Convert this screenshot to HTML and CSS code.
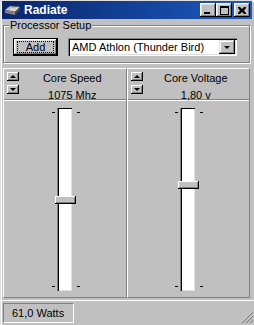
FILE: index.html
```html
<!DOCTYPE html>
<html lang="en">
<head>
    <meta charset="UTF-8">
    <title>Radiate</title>
    <link rel="stylesheet" href="styles.css">
</head>
<body>
    <div class="window">
        <div class="titlebar">
            <svg class="app-icon" width="17" height="16" viewBox="0 0 17 16">
                <path d="M1 8 L6 4 L16 5 L11 10 Z" fill="#d8d8d8" stroke="#606060" stroke-width="0.8"/>
                <path d="M1 8 L11 10 L11 13 L1 11 Z" fill="#808080"/>
                <path d="M11 10 L16 5 L16 8 L11 13 Z" fill="#4a4a4a"/>
                <path d="M4 7 L8 5 L12 6" stroke="#a0a0a0" stroke-width="0.8" fill="none"/>
            </svg>
            <span class="title">Radiate</span>
            <div class="caption-buttons">
                <span class="cap-btn"><span class="glyph-min"></span></span>
                <span class="cap-btn"><span class="glyph-max"></span></span>
                <span class="cap-btn close">
                    <svg width="8" height="7" viewBox="0 0 8 7">
                        <path d="M0 0h2l2 2 2-2h2v1L6 3.5 8 6v1H6L4 5 2 7H0V6l2-2.5L0 1z" fill="#000"/>
                    </svg>
                </span>
            </div>
        </div>

        <fieldset class="group">
            <legend>Processor Setup</legend>
            <div class="group-row">
                <span class="btn default"><span class="focus">Add</span></span>
                <div class="combo">
                    <span class="combo-text">AMD Athlon (Thunder Bird)</span>
                    <span class="combo-arrow"><span class="arrow-down"></span></span>
                </div>
            </div>
        </fieldset>

        <div class="panels">
            <div class="panel">
                <div class="panel-head">
                    <div class="spin">
                        <span class="spin-btn"><span class="arrow-up"></span></span>
                        <span class="spin-btn"><span class="arrow-down"></span></span>
                    </div>
                    <div class="head-text">
                        <div>Core Speed</div>
                        <div>1075 Mhz</div>
                    </div>
                </div>
                <div class="slider-area">
                    <div class="slider">
                        <span class="tick tl"></span><span class="tick tr"></span>
                        <span class="tick bl"></span><span class="tick br"></span>
                        <div class="track"></div>
                        <span class="thumb" style="top: 88px"></span>
                    </div>
                </div>
            </div>
            <div class="panel">
                <div class="panel-head">
                    <div class="spin">
                        <span class="spin-btn"><span class="arrow-up"></span></span>
                        <span class="spin-btn"><span class="arrow-down"></span></span>
                    </div>
                    <div class="head-text">
                        <div>Core Voltage</div>
                        <div>1,80 v</div>
                    </div>
                </div>
                <div class="slider-area">
                    <div class="slider">
                        <span class="tick tl"></span><span class="tick tr"></span>
                        <span class="tick bl"></span><span class="tick br"></span>
                        <div class="track"></div>
                        <span class="thumb" style="top: 73px"></span>
                    </div>
                </div>
            </div>
        </div>

        <div class="statusbar">
            <div class="status-panel">61,0 Watts</div>
            <svg class="grip" width="12" height="12" viewBox="0 0 12 12">
                <path d="M11 1 L1 11 M11 5 L5 11 M11 9 L9 11" stroke="#fff" stroke-width="1"/>
                <path d="M12 1 L1 12 M12 5 L5 12 M12 9 L9 12" stroke="#808080" stroke-width="1.2"/>
            </svg>
        </div>
    </div>
</body>
</html>
```

FILE: styles.css
```css
body {
    margin: 0;
    font-family: "Liberation Sans", Arial, sans-serif;
    font-size: 11px;
    color: #000;
    background: #c0c0c0;
}

.window {
    width: 254px;
    height: 325px;
    background: #c0c0c0;
    box-shadow: inset 1px 1px #dfdfdf, inset 2px 2px #fff;
    display: flex;
    flex-direction: column;
    overflow: hidden;
}

/* title bar */
.titlebar {
    height: 18px;
    margin: 1px 2px 0 2px;
    padding: 0 2px 0 2px;
    display: flex;
    align-items: center;
    background: linear-gradient(to right, #0a246a, #1c5bc0);
}

.app-icon {
    margin-right: 3px;
}

.title {
    color: #fff;
    font-weight: bold;
    font-size: 12px;
}

.caption-buttons {
    margin-left: auto;
    display: flex;
}

.cap-btn {
    width: 16px;
    height: 14px;
    background: #c0c0c0;
    box-shadow: inset -1px -1px #000, inset 1px 1px #fff, inset -2px -2px #808080, inset 2px 2px #dfdfdf;
    display: flex;
    align-items: center;
    justify-content: center;
}

.cap-btn.close {
    margin-left: 2px;
}

.glyph-min {
    width: 6px;
    height: 2px;
    background: #000;
    margin-top: 6px;
    margin-left: -2px;
}

.glyph-max {
    width: 7px;
    height: 6px;
    border: 1px solid #000;
    border-top-width: 2px;
}

/* group box */
.group {
    margin: 0 4px 0 3px;
    padding: 6px 11px 6px 9px;
    border: 1px solid #808080;
    box-shadow: inset 1px 1px #fff, 1px 1px #fff;
}

.group legend {
    padding: 0 1px;
    margin-left: -4px;
    line-height: 13px;
    background: #c0c0c0;
}

.group-row {
    display: flex;
    gap: 10px;
}

.btn {
    width: 45px;
    height: 18px;
    box-sizing: border-box;
    background: #c0c0c0;
    display: flex;
    align-items: center;
    justify-content: center;
}

.btn.default {
    border: 1px solid #000;
    box-shadow: inset -1px -1px #000, inset 1px 1px #fff, inset -2px -2px #808080, inset 2px 2px #dfdfdf;
}

.focus {
    width: 35px;
    height: 10px;
    border: 1px dotted #000;
    line-height: 10px;
    text-align: center;
}

.combo {
    width: 169px;
    height: 18px;
    box-sizing: border-box;
    background: #fff;
    box-shadow: inset 1px 1px #808080, inset 2px 2px #000, inset -1px -1px #fff, inset -2px -2px #dfdfdf;
    display: flex;
    align-items: center;
    padding: 2px;
}

.combo-text {
    flex: 1;
    padding-left: 2px;
}

.combo-arrow {
    width: 16px;
    height: 14px;
    background: #c0c0c0;
    box-shadow: inset -1px -1px #000, inset 1px 1px #dfdfdf, inset -2px -2px #808080, inset 2px 2px #fff;
    display: flex;
    align-items: center;
    justify-content: center;
}

.arrow-down {
    width: 0;
    height: 0;
    border-left: 3px solid transparent;
    border-right: 3px solid transparent;
    border-top: 3px solid #000;
}

.arrow-up {
    width: 0;
    height: 0;
    border-left: 3px solid transparent;
    border-right: 3px solid transparent;
    border-bottom: 3px solid #000;
}

/* panels */
.panels {
    margin: 5px 4px 0 3px;
    display: flex;
    height: 230px;
}

.panel {
    flex: 1;
    display: flex;
    flex-direction: column;
    border-top: 1px solid #fff;
    border-left: 1px solid #fff;
    border-right: 1px solid #808080;
    border-bottom: 1px solid #808080;
}

.panel-head {
    height: 31px;
    display: flex;
    border-bottom: 1px solid #fff;
    box-shadow: 0 -1px 0 #808080 inset;
}

.spin {
    display: flex;
    flex-direction: column;
    gap: 4px;
    padding: 3px 0 0 3px;
}

.spin-btn {
    width: 12px;
    height: 9px;
    background: #c0c0c0;
    box-shadow: inset -1px -1px #000, inset 1px 1px #fff, inset -2px -2px #808080;
    display: flex;
    align-items: center;
    justify-content: center;
}

.head-text {
    flex: 1;
    text-align: center;
    line-height: 17px;
    padding-top: 1px;
}

.slider-area {
    flex: 1;
    display: flex;
    justify-content: center;
}

.slider {
    position: relative;
    width: 14px;
    margin-top: 7px;
    height: 183px;
}

.track {
    height: 100%;
    background: #fff;
    box-shadow: inset 1px 1px #000, inset -1px -1px #dfdfdf;
    border-left: 1px solid #808080;
    margin-left: -1px;
}

.tick {
    position: absolute;
    width: 3px;
    height: 1px;
    background: #000;
}

.tick.tl { left: -6px; top: 4px; }
.tick.tr { right: -8px; top: 4px; }
.tick.bl { left: -6px; bottom: 4px; }
.tick.br { right: -8px; bottom: 4px; }

.thumb {
    position: absolute;
    left: -3px;
    width: 21px;
    height: 8px;
    box-sizing: border-box;
    background: #c0c0c0;
    box-shadow: inset -1px -1px #000, inset 1px 1px #fff, inset -2px -2px #808080;
}

/* status bar */
.statusbar {
    margin-top: 2px;
    border-top: 1px solid #fff;
    flex: 1;
    display: flex;
    align-items: flex-end;
    padding: 0 1px 2px 3px;
}

.status-panel {
    width: 71px;
    height: 20px;
    box-sizing: border-box;
    border-top: 1px solid #808080;
    border-left: 1px solid #808080;
    border-right: 1px solid #fff;
    border-bottom: 1px solid #fff;
    padding-left: 8px;
    line-height: 18px;
}

.grip {
    margin-left: auto;
}
```
